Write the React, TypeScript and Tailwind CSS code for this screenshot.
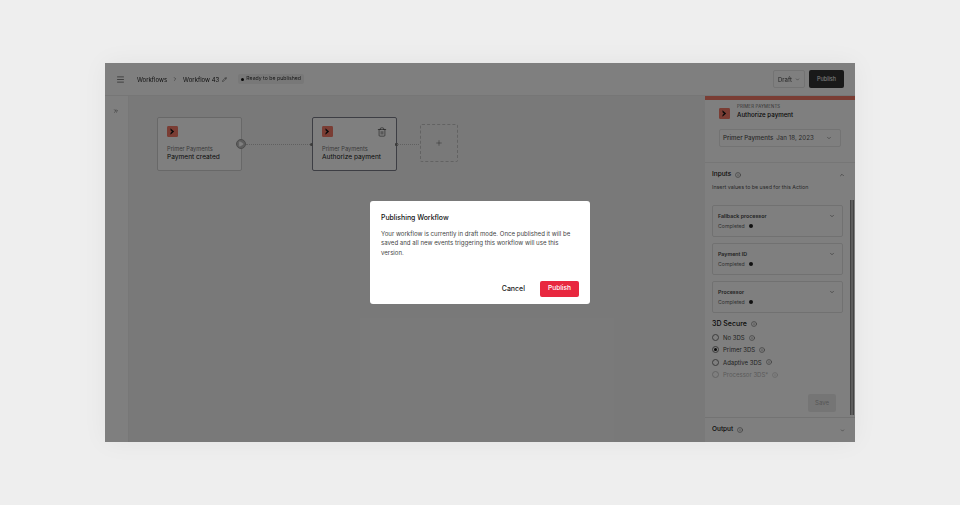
import { ChevronDown, ChevronUp, ChevronRight, ChevronsRight, Menu, Pencil, Plus, Trash2, Info, Play } from "lucide-react";

function BrandIcon({ size = 12 }: { size?: number }) {
  return (
    <svg width={size} height={size} viewBox="0 0 12 12" className="shrink-0">
      <rect width="12" height="12" rx="1.5" fill="#f47a68" />
      <path d="M3.8 2.4 L7.8 6 L3.8 9.6 L3.8 7.5 L5.4 6 L3.8 4.5 Z" fill="#161616" />
    </svg>
  );
}

function InfoDot() {
  return <Info className="w-[6px] h-[6px] text-[#555] shrink-0" strokeWidth={2} />;
}

function Node({ title, selected }: { title: string; selected?: boolean }) {
  return (
    <div
      className={`w-[85px] h-[54px] rounded-[2px] bg-white px-[9px] pt-[8px] relative border ${
        selected ? "border-[#7a7c88]" : "border-[#d0d0d0]"
      }`}
    >
      <div className="flex items-center justify-between">
        <BrandIcon size={11} />
        {selected && <Trash2 className="w-[10px] h-[10px] text-[#222]" strokeWidth={1.3} />}
      </div>
      <div className="mt-[8px] text-[5.7px] leading-[8px] text-[#777]">Primer Payments</div>
      <div className="text-[6.6px] leading-[9px] text-[#111] whitespace-nowrap">{title}</div>
    </div>
  );
}

function InputCard({ label }: { label: string }) {
  return (
    <div className="h-[32px] rounded-[2px] border border-[#e2e2e2] pl-[5px] pr-[7px] pt-[7px]">
      <div className="flex items-center justify-between">
        <span className="text-[5.3px] leading-[7px] font-semibold text-[#444]">{label}</span>
        <ChevronDown className="w-[6px] h-[6px] text-[#444]" />
      </div>
      <div className="mt-[2px] flex items-center gap-[4px]">
        <span className="text-[5.2px] leading-[8px] text-[#666]">Completed</span>
        <span className="w-[4px] h-[4px] rounded-full bg-[#222]" />
      </div>
    </div>
  );
}

function Radio({ label, checked, disabled }: { label: string; checked?: boolean; disabled?: boolean }) {
  return (
    <div className={`flex items-center h-[12.3px] ${disabled ? "opacity-40" : ""}`}>
      <span className="w-[7px] h-[7px] rounded-full border border-[#777] flex items-center justify-center mr-[4px]">
        {checked && <span className="w-[3px] h-[3px] rounded-full bg-[#111]" />}
      </span>
      <span className="text-[6px] text-[#444] mr-[4px]">{label}</span>
      <InfoDot />
    </div>
  );
}

export default function App() {
  return (
    <div
      className="w-[960px] h-[505px] bg-[#eeeeee] flex items-center justify-center overflow-hidden"
      style={{ fontFamily: "Inter, 'Noto Sans', sans-serif" }}
    >
      <div className="relative w-[750px] h-[379px] bg-white flex flex-col overflow-hidden shadow-[0_0_24px_rgba(0,0,0,0.05)] blur-[0.3px]">
        <header className="h-[33px] shrink-0 flex items-center pl-[11px] pr-[11px] border-b border-[#ededed]">
          <Menu className="w-[9px] h-[9px] text-[#222]" strokeWidth={1.5} />
          <span className="ml-[12px] text-[6px] text-[#222]">Workflows</span>
          <ChevronRight className="w-[6px] h-[6px] ml-[5px] text-[#444]" />
          <span className="ml-[5px] text-[6px] text-[#222]">Workflow 43</span>
          <Pencil className="w-[5px] h-[5px] ml-[3px] text-[#222]" />
          <span className="ml-[11px] h-[10px] px-[3px] rounded-[2px] bg-[#f0f0f0] flex items-center gap-[2px] text-[5.2px] text-[#333]">
            <span className="w-[3px] h-[3px] rounded-full bg-[#111]" />
            Ready to be published
          </span>
          <div className="ml-auto flex items-center gap-[4px]">
            <span className="w-[32px] h-[18px] rounded-[2px] border border-[#e6e6e6] flex items-center justify-center gap-[3px] text-[6px] text-[#444]">
              Draft
              <ChevronDown className="w-[5px] h-[5px]" />
            </span>
            <span className="w-[35px] h-[18px] rounded-[2px] bg-[#333] flex items-center justify-center text-[5.5px] text-white">
              Publish
            </span>
          </div>
        </header>

        <div className="flex-1 flex min-h-0">
          <aside className="w-[24px] shrink-0 flex justify-center pt-[12px] pr-[1px] border-r border-[#efefef]">
            <ChevronsRight className="w-[6px] h-[6px] text-[#333]" />
          </aside>

          <main className="relative flex-1 bg-[#f3f3f3]">
            <div className="absolute left-[28px] top-[21px]">
              <Node title="Payment created" />
            </div>
            <div className="absolute left-[107px] top-[43px] w-[10px] h-[10px] rounded-full bg-[#bbb] border border-[#999] flex items-center justify-center">
              <Play className="w-[6px] h-[6px] text-white fill-white" />
            </div>
            <div className="absolute left-[117px] top-[48px] w-[66px] border-t border-dotted border-[#c0c0c0]" />
            <div className="absolute left-[183px] top-[21px]">
              <Node title="Authorize payment" selected />
            </div>
            <div className="absolute left-[181px] top-[47px] w-[3px] h-[3px] rounded-full bg-[#777]" />
            <div className="absolute left-[266px] top-[47px] w-[3px] h-[3px] rounded-[1px] bg-[#777]" />
            <div className="absolute left-[268px] top-[48px] w-[22px] border-t border-dotted border-[#c0c0c0]" />
            <div className="absolute left-[291px] top-[28px] w-[38px] h-[38px] rounded-[2px] border border-dashed border-[#c4c4c4] flex items-center justify-center">
              <Plus className="w-[8px] h-[8px] text-[#555]" strokeWidth={1.5} />
            </div>
          </main>

          <aside className="w-[150px] shrink-0 bg-white flex flex-col relative">
            <div className="h-[4px] bg-[#f47a68] shrink-0" />
            <div className="px-[14px] pt-[4px] flex items-end gap-[7px]">
              <BrandIcon size={11} />
              <div>
                <div className="text-[4.3px] leading-[6px] text-[#666] tracking-[0.2px]">PRIMER PAYMENTS</div>
                <div className="text-[6.2px] leading-[9px] text-[#111] font-medium whitespace-nowrap">Authorize payment</div>
              </div>
            </div>
            <div className="mx-[14px] mt-[10px] h-[18px] rounded-[2px] border border-[#e6e6e6] flex items-center px-[3px] text-[6.2px] text-[#555] whitespace-nowrap">
              <span className="font-medium">Primer Payments</span>
              <span className="ml-[3px]">Jan 18, 2023</span>
              <ChevronDown className="w-[6px] h-[6px] ml-auto mr-[5px]" />
            </div>
            <div className="mt-[14.5px] border-t border-[#ededed] pl-[7px] pt-[8px] pr-[10px]">
              <div className="flex items-center gap-[4px] h-[9px]">
                <span className="text-[6.5px] font-medium text-[#111]">Inputs</span>
                <InfoDot />
                <ChevronUp className="w-[6px] h-[6px] ml-auto text-[#444]" />
              </div>
              <div className="mt-[3px] text-[5.3px] leading-[8px] text-[#555] whitespace-nowrap">
                Insert values to be used for this Action
              </div>
            </div>
            <div className="relative flex-1 min-h-0 pl-[7px] pt-[14px] pr-[12px]">
              <div className="flex flex-col gap-[6px]">
                <InputCard label="Fallback processor" />
                <InputCard label="Payment ID" />
                <InputCard label="Processor" />
              </div>
              <div className="mt-[7px] flex items-center gap-[4px] h-[9px]">
                <span className="text-[7px] font-medium text-[#111]">3D Secure</span>
                <InfoDot />
              </div>
              <div className="mt-[3px]">
                <Radio label="No 3DS" />
                <Radio label="Primer 3DS" checked />
                <Radio label="Adaptive 3DS" />
                <Radio label="Processor 3DS*" disabled />
              </div>
              <div className="flex justify-end mt-[13px] pr-[7px]">
                <span className="w-[28px] h-[18px] rounded-[2px] bg-[#ebebeb] flex items-center justify-center text-[6px] text-[#aaa]">
                  Save
                </span>
              </div>
              <div className="absolute right-[1px] top-[9px] h-[215px] w-[4px] bg-[#bdbdbd] border-x border-[#888]" />
            </div>
            <div className="h-[25px] shrink-0 border-t border-[#e6e6e6] flex items-center gap-[4px] pl-[7px] pr-[10px]">
              <span className="text-[6.5px] font-medium text-[#111]">Output</span>
              <InfoDot />
              <ChevronDown className="w-[5px] h-[5px] ml-auto text-[#444]" />
            </div>
          </aside>
        </div>

        <div className="absolute inset-0 bg-black/50 flex items-center justify-center">
          <div className="w-[220px] h-[103px] rounded-[3px] bg-white pt-[12px] px-[11px] flex flex-col">
            <div className="text-[6.9px] leading-[10px] font-medium text-[#111]">Publishing Workflow</div>
            <p className="mt-[6px] text-[6.1px] leading-[9.3px] text-[#444]">
              Your workflow is currently in draft mode. Once published it will be saved and all new events triggering this workflow will use this version.
            </p>
            <div className="mt-auto mb-[7px] flex items-center justify-end gap-[15px]">
              <span className="text-[7px] font-medium text-[#222]">Cancel</span>
              <span className="w-[39px] h-[16px] rounded-[2px] bg-[#e8283f] flex items-center justify-center text-[6.6px] font-medium text-white">
                Publish
              </span>
            </div>
          </div>
        </div>
      </div>
    </div>
  );
}
